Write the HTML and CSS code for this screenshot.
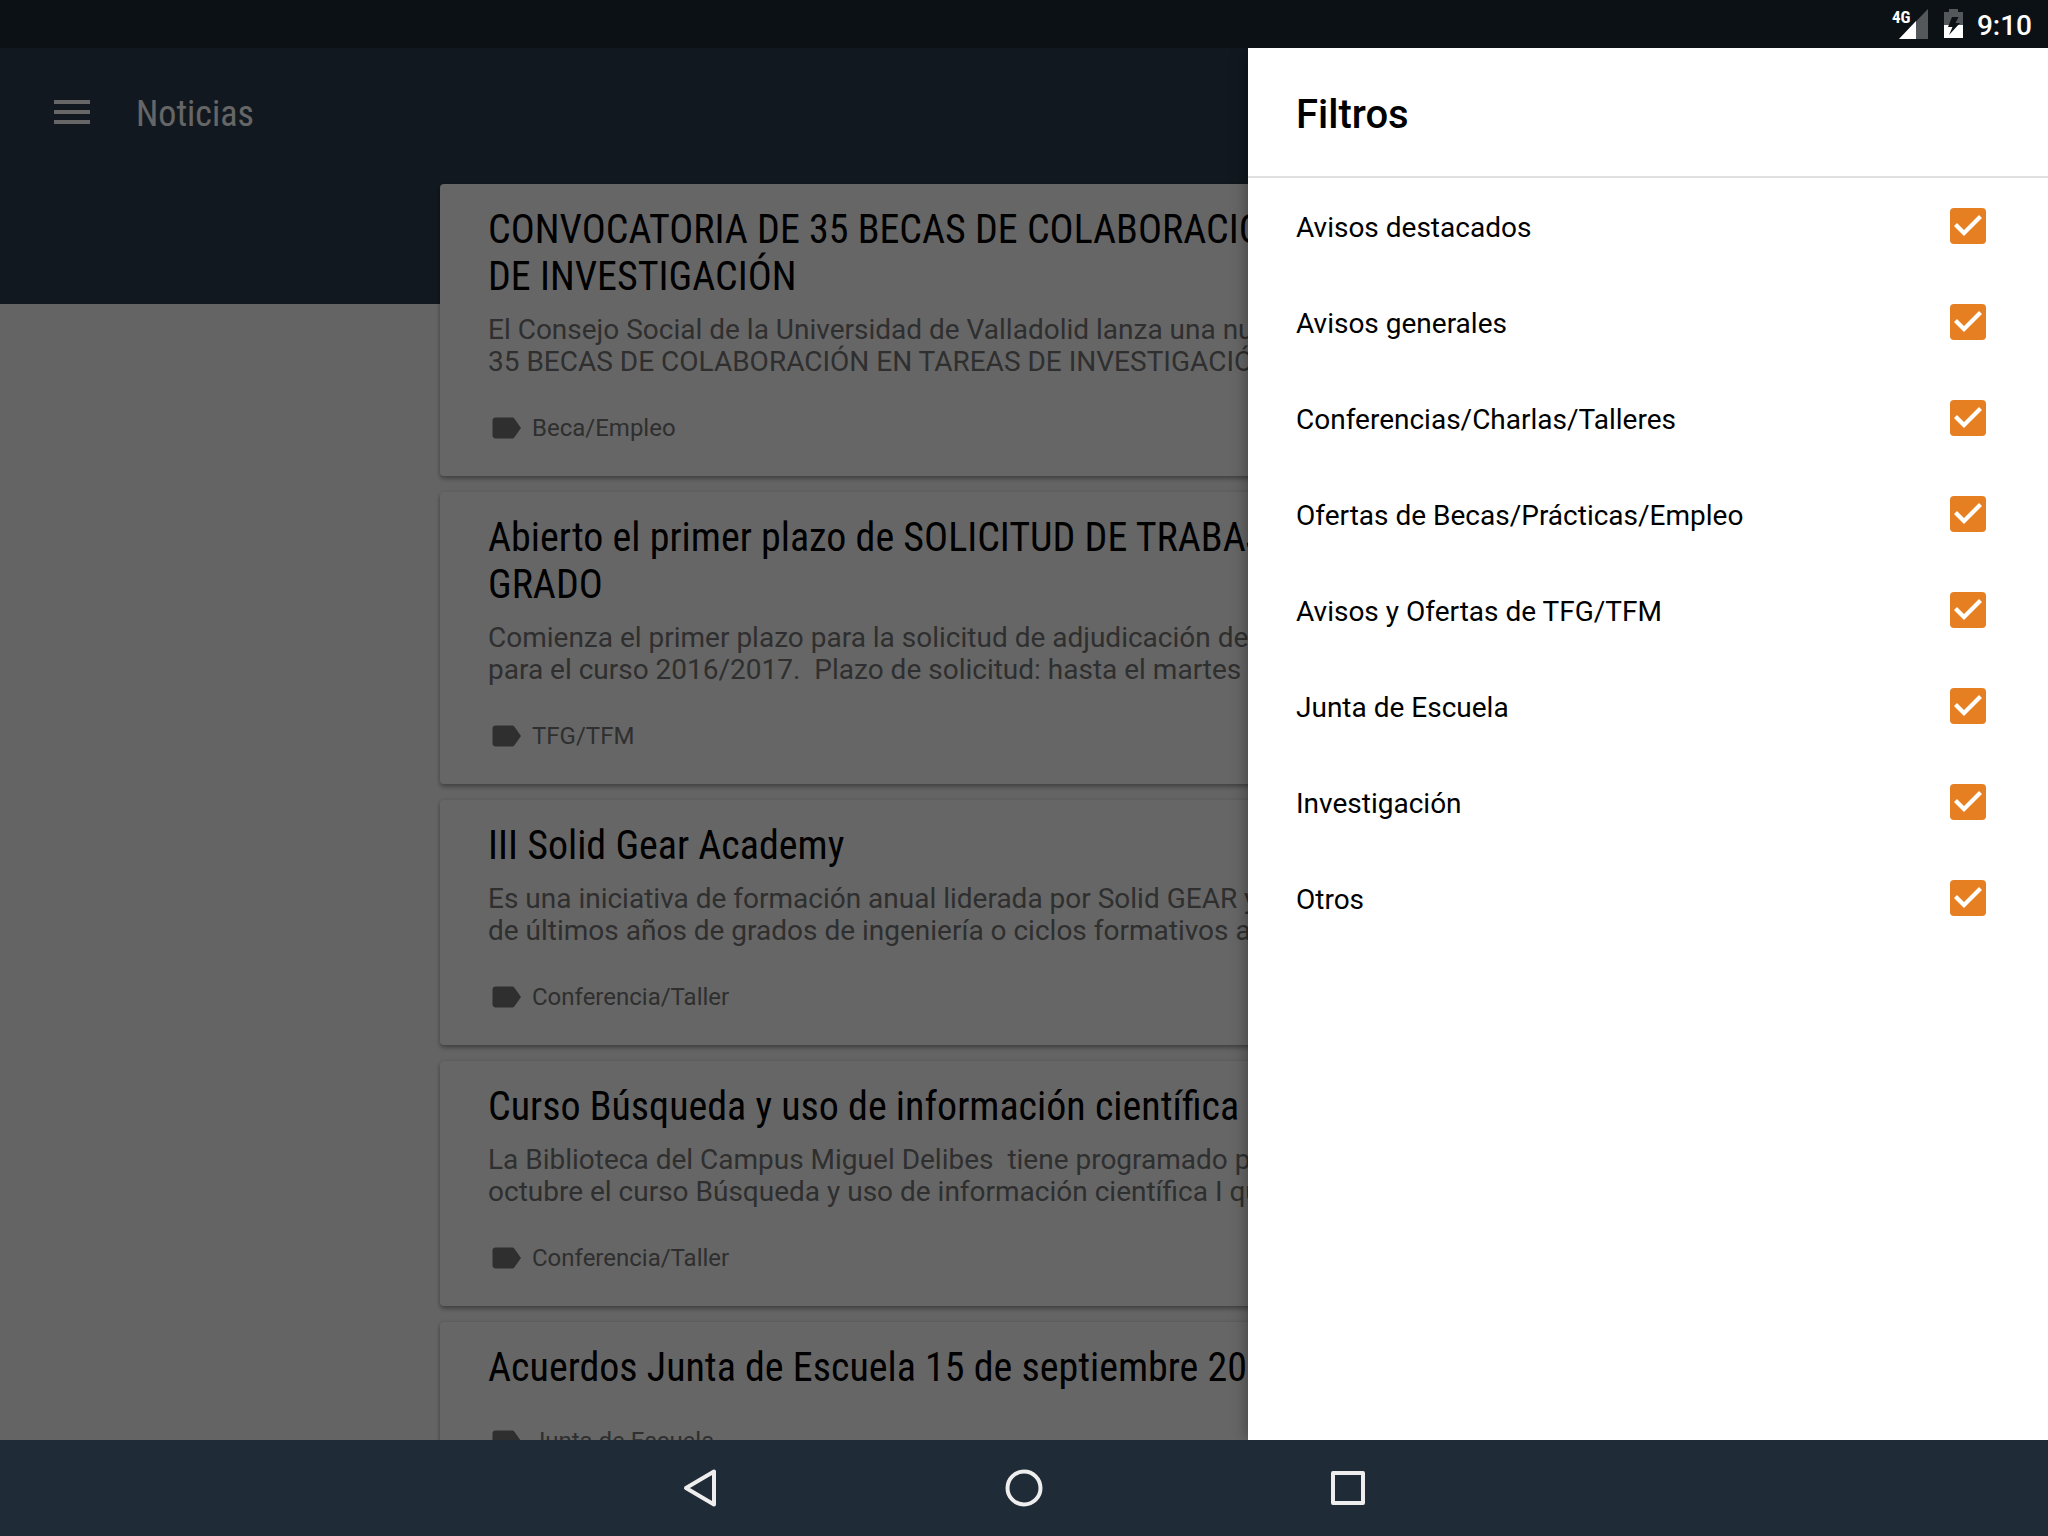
FILE: index.html
```html
<!DOCTYPE html>
<html lang="es">
<head>
<meta charset="utf-8">
<meta name="viewport" content="width=device-width, initial-scale=1">
<title>Noticias</title>
<link rel="stylesheet" href="styles.css">
</head>
<body>
<header class="status-bar">
  <svg class="signal" viewBox="0 0 38 32" aria-hidden="true">
    <path class="dim" d="M36 1V31H7Z"/>
    <path class="lit" d="M24 13V31H7Z"/>
    <text class="network" x="0" y="15">4G</text>
  </svg>
  <svg class="battery" viewBox="0 0 20 30" aria-hidden="true">
    <path class="dim" d="M5 0H14V3H19V16H0V3H5Z"/>
    <path class="lit" d="M0 16H19V29H0Z"/>
    <path class="bolt" d="M8 8H14.500L11.500 14H16L5 26L8.500 18H4Z"/>
  </svg>
  <time class="clock">9:10</time>
</header>

<div class="app">
  <main class="page">
    <div class="toolbar">
      <button class="menu-button" type="button" aria-label="Menú"><svg viewBox="0 0 48 48" aria-hidden="true"><path d="M6 12H42V16H6ZM6 22H42V26H6ZM6 32H42V36H6Z"/></svg></button>
      <h1 class="toolbar-title">Noticias</h1>
    </div>
    <div class="feed">
      <article class="card">
        <h2 class="card-title">CONVOCATORIA DE 35 BECAS DE COLABORACIÓN EN TAREAS<br>DE INVESTIGACIÓN</h2>
        <p class="card-text">El Consejo Social de la Universidad de Valladolid lanza una nueva<br>35 BECAS DE COLABORACIÓN EN TAREAS DE INVESTIGACIÓN</p>
        <div class="tag"><svg viewBox="0 0 24 24" aria-hidden="true"><use href="#label"/></svg>Beca/Empleo</div>
      </article>
      <article class="card">
        <h2 class="card-title">Abierto el primer plazo de SOLICITUD DE TRABAJO FIN DE<br>GRADO</h2>
        <p class="card-text">Comienza el primer plazo para la solicitud de adjudicación de<br>para el curso 2016/2017.&nbsp; Plazo de solicitud: hasta el martes</p>
        <div class="tag"><svg viewBox="0 0 24 24" aria-hidden="true"><use href="#label"/></svg>TFG/TFM</div>
      </article>
      <article class="card">
        <h2 class="card-title">III Solid Gear Academy</h2>
        <p class="card-text">Es una iniciativa de formación anual liderada por Solid GEAR y<br>de últimos años de grados de ingeniería o ciclos formativos a</p>
        <div class="tag"><svg viewBox="0 0 24 24" aria-hidden="true"><use href="#label"/></svg>Conferencia/Taller</div>
      </article>
      <article class="card">
        <h2 class="card-title">Curso Búsqueda y uso de información científica I</h2>
        <p class="card-text">La Biblioteca del Campus Miguel Delibes&nbsp; tiene programado para<br>octubre el curso Búsqueda y uso de información científica I que</p>
        <div class="tag"><svg viewBox="0 0 24 24" aria-hidden="true"><use href="#label"/></svg>Conferencia/Taller</div>
      </article>
      <article class="card">
        <h2 class="card-title">Acuerdos Junta de Escuela 15 de septiembre 2016</h2>
        <div class="tag"><svg viewBox="0 0 24 24" aria-hidden="true"><path id="label" d="M17.63 5.84C17.27 5.33 16.67 5 16 5L5 5.01C3.9 5.01 3 5.9 3 7v10c0 1.1.9 1.99 2 1.99L16 19c.67 0 1.27-.33 1.63-.84L22 12l-4.37-6.16z"/></svg>Junta de Escuela</div>
      </article>
    </div>
  </main>
  <div class="scrim"></div>
  <aside class="drawer">
    <h2 class="drawer-title">Filtros</h2>
    <form class="filters">
      <label class="filter"><span>Avisos destacados</span><input type="checkbox" checked></label>
      <label class="filter"><span>Avisos generales</span><input type="checkbox" checked></label>
      <label class="filter"><span>Conferencias/Charlas/Talleres</span><input type="checkbox" checked></label>
      <label class="filter"><span>Ofertas de Becas/Prácticas/Empleo</span><input type="checkbox" checked></label>
      <label class="filter"><span>Avisos y Ofertas de TFG/TFM</span><input type="checkbox" checked></label>
      <label class="filter"><span>Junta de Escuela</span><input type="checkbox" checked></label>
      <label class="filter"><span>Investigación</span><input type="checkbox" checked></label>
      <label class="filter"><span>Otros</span><input type="checkbox" checked></label>
    </form>
  </aside>
</div>

<nav class="nav-bar">
  <button class="nav-button" type="button" aria-label="Atrás"><svg viewBox="0 0 48 48" aria-hidden="true"><path d="M38 7.500V40.500L10 24Z"/></svg></button>
  <button class="nav-button" type="button" aria-label="Inicio"><svg viewBox="0 0 48 48" aria-hidden="true"><circle cx="24" cy="24" r="16.500"/></svg></button>
  <button class="nav-button" type="button" aria-label="Recientes"><svg viewBox="0 0 48 48" aria-hidden="true"><rect x="9" y="9" width="30" height="30"/></svg></button>
</nav>
</body>
</html>
```
FILE: styles.css
```css
* {
  box-sizing: border-box;
}

body {
  margin: 0;
  height: 100vh;
  display: flex;
  flex-direction: column;
  overflow: hidden;
  font-family: Roboto, sans-serif;
  background: #fafafa;
}

h1, h2, p {
  margin: 0;
  font-weight: 400;
}

button {
  padding: 0;
  border: 0;
  background: none;
}

svg {
  display: block;
}

/* System status bar */
.status-bar {
  flex: none;
  height: 48px;
  padding: 0 16px;
  display: flex;
  align-items: center;
  justify-content: flex-end;
  background: #0c1116;
  color: #fff;
}

.signal {
  width: 38px;
  height: 32px;
  margin-right: 14px;
}

.battery {
  width: 20px;
  height: 30px;
  margin-right: 13px;
}

.dim {
  fill: #54585b;
}

.lit {
  fill: #fff;
}

.bolt {
  fill: #0c1116;
}

.network {
  font: 700 17px "Roboto Condensed", Roboto, sans-serif;
  fill: #fff;
}

.clock {
  padding-top: 2px;
  font-size: 28px;
  font-weight: 500;
  line-height: 33px;
}

/* News page */
.app {
  flex: 1;
  min-height: 0;
  position: relative;
  overflow: hidden;
}

.page {
  background: linear-gradient(#2c3e50 256px, #fafafa 256px);
}

.toolbar {
  height: 128px;
  padding: 0 48px;
  display: flex;
  align-items: center;
  gap: 40px;
}

.menu-button svg {
  width: 48px;
  height: 48px;
  fill: #fff;
}

.toolbar-title {
  padding-top: 4px;
  font: 400 36px/42px "Roboto Condensed", Roboto, sans-serif;
  color: #fff;
}

.feed {
  max-width: 1168px;
  margin: 0 auto;
  padding: 8px 0;
  display: flex;
  flex-direction: column;
  gap: 16px;
}

.card {
  padding: 22px 48px 30px;
  border-radius: 4px;
  background: #fff;
  box-shadow: 0 3px 4px rgba(0, 0, 0, 0.3), 0 0 4px rgba(0, 0, 0, 0.12);
  white-space: nowrap;
}

.card-title {
  font: 400 40px/47px "Roboto Condensed", Roboto, sans-serif;
  font-variant-ligatures: discretionary-ligatures;
  color: #000;
}

.card-text {
  margin-top: 14px;
  font-size: 28px;
  line-height: 32px;
  color: #757575;
}

.tag {
  margin-top: 32px;
  display: flex;
  align-items: center;
  gap: 8px;
  font-size: 24px;
  line-height: 36px;
  color: #757575;
}

.tag svg {
  width: 36px;
  height: 36px;
  fill: currentColor;
}

/* Filter drawer */
.scrim {
  position: absolute;
  inset: 0;
  background: rgba(0, 0, 0, 0.6);
}

.drawer {
  position: absolute;
  inset: 0 0 0 auto;
  width: 800px;
  background: #fff;
  box-shadow: 0 0 16px rgba(0, 0, 0, 0.4);
}

.drawer-title {
  padding: 43px 48px 38px;
  border-bottom: 2px solid #e0e0e0;
  font-size: 40px;
  font-weight: 500;
  line-height: 47px;
}

.filter {
  height: 96px;
  padding: 0 62px 0 48px;
  display: flex;
  align-items: center;
  justify-content: space-between;
  font-size: 28px;
  line-height: 33px;
  color: #000;
}

.filter span {
  padding-top: 2px;
}

.filter input {
  appearance: none;
  width: 36px;
  height: 36px;
  margin: 0;
  border: 4px solid #757575;
  border-radius: 4px;
}

.filter input:checked {
  border: 0;
  background: #e67e22;
}

.filter input:checked::before {
  content: "";
  display: block;
  width: 36px;
  height: 36px;
  background: #fff;
  clip-path: polygon(4px 18px, 7px 15px, 14px 22px, 29px 7px, 32px 10px, 14px 28px);
}

/* System navigation bar */
.nav-bar {
  flex: none;
  height: 96px;
  display: flex;
  align-items: center;
  justify-content: center;
  gap: 276px;
  background: #202b38;
}

.nav-button svg {
  width: 48px;
  height: 48px;
  fill: none;
  stroke: #eee;
  stroke-width: 4px;
  stroke-linejoin: round;
}
```
